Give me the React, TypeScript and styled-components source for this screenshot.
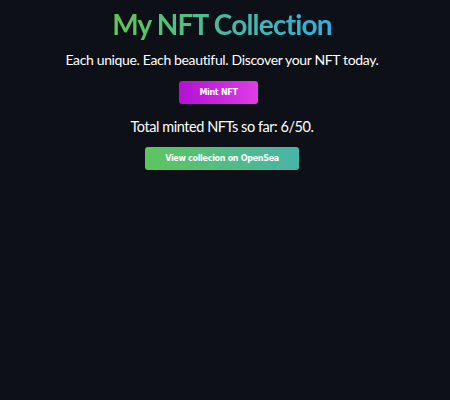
import React from "react";
import styled, { createGlobalStyle } from "styled-components";

const Global = createGlobalStyle`
  html, body { margin: 0; padding: 0; background: #0d1117; }
  body { font-family: Lato, "Noto Sans", sans-serif; color: #fff; }
`;

const Page = styled.div`
  width: 444px;
  height: 400px;
  background: #0d1117;
  display: flex;
  flex-direction: column;
  align-items: center;
  padding-top: 6px;
  box-sizing: border-box;
`;

const Title = styled.h1`
  margin: 0;
  font-family: Lato, sans-serif;
  font-size: 28px;
  line-height: 36px;
  font-weight: 700;
  letter-spacing: -0.8px;
  background: linear-gradient(90deg, #60c657 0%, #35aee2 100%);
  -webkit-background-clip: text;
  background-clip: text;
  color: transparent;
`;

const Sub = styled.p`
  margin: 9px 0 0;
  font-size: 14px;
  line-height: 18px;
  letter-spacing: -0.35px;
  color: #fff;
`;

const Button = styled.button<{ $variant: "mint" | "sea"; $w: number }>`
  width: ${(p) => p.$w}px;
  height: 23px;
  border: none;
  border-radius: 3px;
  color: #fff;
  font-family: "DejaVu Sans", sans-serif;
  font-size: 8px;
  font-weight: bold;
  letter-spacing: -0.3px;
  padding: 0;
  cursor: pointer;
  background: ${(p) =>
    p.$variant === "mint"
      ? "linear-gradient(90deg, #b311d4 0%, #dd3ee4 100%)"
      : "linear-gradient(90deg, #5cc55e 0%, #47b5a8 100%)"};
`;

const Count = styled.p`
  margin: 14px 0 11px;
  font-size: 14.5px;
  line-height: 18px;
  letter-spacing: -0.45px;
  color: #fff;
`;

const MintWrap = styled.div`
  margin-top: 10px;
  margin-right: 7px;
`;

export default function App() {
  return (
    <>
      <Global />
      <Page>
        <Title>My NFT Collection</Title>
        <Sub>Each unique. Each beautiful. Discover your NFT today.</Sub>
        <MintWrap>
          <Button $variant="mint" $w={79}>Mint NFT</Button>
        </MintWrap>
        <Count>Total minted NFTs so far: 6/50.</Count>
        <Button $variant="sea" $w={154}>View collecion on OpenSea</Button>
      </Page>
    </>
  );
}
